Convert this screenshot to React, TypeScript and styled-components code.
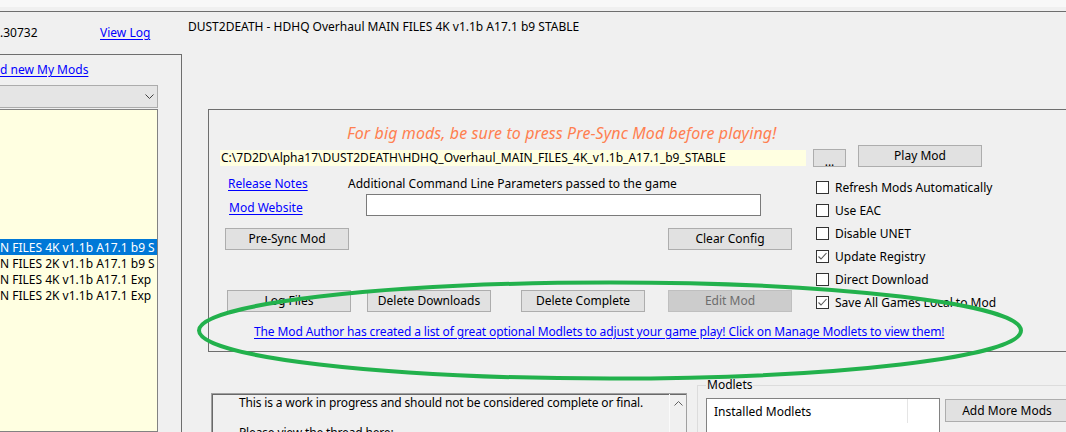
import React from "react";
import styled, { createGlobalStyle } from "styled-components";

const GlobalStyle = createGlobalStyle`
  *, *::before, *::after { box-sizing: border-box; }
  html, body { margin: 0; padding: 0; background: #f0f0f0; }
  body {
    font-family: "Noto Sans", "Open Sans", "Liberation Sans", sans-serif;
    font-size: 12px;
    color: #000;
  }
`;

const Window = styled.div`
  position: relative;
  width: 1066px;
  height: 432px;
  overflow: hidden;
  background: #f0f0f0;
  display: flex;
  flex-direction: column;
`;

const TopStrip = styled.div`
  flex: none;
  height: 12px;
  background: linear-gradient(to bottom, #f8f8f8 0 7px, #f0f0f0 7px 11px);
  border-bottom: 1px solid #6e6e6e;
`;

const Body = styled.div`
  flex: 1;
  min-height: 0;
  display: flex;
`;

const LeftColumn = styled.div`
  flex: none;
  width: 182px;
  display: flex;
  flex-direction: column;
`;

const Header = styled.div`
  flex: none;
  height: 42px;
  display: flex;
  align-items: center;
  line-height: 16px;
`;

const Version = styled.span`
  width: 100px;
  white-space: nowrap;
`;

const Link = styled.a<{ $tight?: boolean }>`
  color: #0000ff;
  text-decoration: underline;
  text-underline-offset: 2px;
  white-space: nowrap;
  line-height: 16px;
  letter-spacing: ${(p) => (p.$tight ? "-0.12px" : "normal")};
  cursor: pointer;
`;

const SidePanel = styled.div`
  flex: 1;
  min-height: 0;
  display: flex;
  flex-direction: column;
  border-top: 1px solid #6e6e6e;
  border-right: 1px solid #6e6e6e;
`;

const SideLinkRow = styled.div`
  flex: none;
  height: 30px;
  display: flex;
  align-items: center;
`;

const Combo = styled.div`
  flex: none;
  width: 159px;
  height: 23px;
  margin-left: -1px;
  background: #e5e5e5;
  border: 1px solid #acacac;
  display: flex;
  align-items: center;
  justify-content: flex-end;
  padding-right: 3px;
`;

const ModList = styled.div`
  flex: 1;
  width: 159px;
  margin-top: 1px;
  margin-left: -1px;
  background: #ffffe1;
  border: 1px solid #828282;
  padding-top: 1px;
  overflow: hidden;
`;

const ModItem = styled.div<{ $selected?: boolean }>`
  height: 16px;
  line-height: 17px;
  white-space: nowrap;
  overflow: hidden;
  background: ${(p) => (p.$selected ? "#0078d7" : "transparent")};
  color: ${(p) => (p.$selected ? "#fff" : "#000")};
`;

const RightColumn = styled.div`
  flex: 1;
  min-width: 0;
  display: flex;
  flex-direction: column;
`;

const TitleRow = styled.div`
  flex: none;
  height: 97px;
  padding: 7px 0 0 6px;
  line-height: 16px;
  white-space: nowrap;
`;

const MainBox = styled.div`
  flex: none;
  height: 243px;
  margin-left: 26px;
  margin-right: -20px;
  border: 1px solid #6e6e6e;
  display: flex;
  flex-direction: column;
`;

const Notice = styled.div`
  margin-top: 13px;
  height: 20px;
  line-height: 20px;
  padding-left: 138px;
  font-size: 16px;
  font-style: italic;
  letter-spacing: 0.1px;
  color: #ff7f50;
  white-space: nowrap;
`;

const PathRow = styled.div`
  margin-top: 2px;
  height: 22px;
  display: flex;
  align-items: flex-end;
`;

const PathField = styled.div`
  width: 586px;
  height: 16px;
  margin-left: 11px;
  margin-bottom: 1px;
  padding-left: 1px;
  line-height: 16px;
  background: #ffffe1;
  white-space: nowrap;
  overflow: hidden;
`;

const Button = styled.button<{ $w?: number; $h?: number; $disabled?: boolean }>`
  flex: none;
  width: ${(p) => p.$w ?? 124}px;
  height: ${(p) => p.$h ?? 22}px;
  padding: 0;
  margin: 0;
  font: inherit;
  line-height: 16px;
  background: ${(p) => (p.$disabled ? "#cccccc" : "#e1e1e1")};
  color: ${(p) => (p.$disabled ? "#6d6d6d" : "#000")};
  border: 1px solid ${(p) => (p.$disabled ? "#bfbfbf" : "#adadad")};
  border-radius: 0;
  white-space: nowrap;
`;

const BrowseButton = styled(Button)`
  margin-left: 7px;
  line-height: 20px;
  padding-top: 2px;
`;

const PlayButton = styled(Button)`
  margin-left: 12px;
`;

const Middle = styled.div`
  display: flex;
`;

const LeftPane = styled.div`
  flex: none;
  width: 607px;
  display: flex;
  flex-direction: column;
`;

const InfoRow = styled.div<{ $top: number; $pad: number; $h: number }>`
  margin-top: ${(p) => p.$top}px;
  height: ${(p) => p.$h}px;
  padding-left: ${(p) => p.$pad}px;
  display: flex;
  align-items: flex-end;
  line-height: 16px;
  white-space: nowrap;
`;

const LinkCell = styled.div<{ $w: number }>`
  flex: none;
  width: ${(p) => p.$w}px;
  height: 16px;
`;

const TextInput = styled.div`
  flex: none;
  width: 395px;
  height: 22px;
  background: #fff;
  border: 1px solid #7a7a7a;
`;

const SpreadRow = styled.div`
  margin-top: 12px;
  padding: 0 24px 0 16px;
  display: flex;
  justify-content: space-between;
`;

const ActionRow = styled.div`
  margin-top: 40px;
  padding-left: 18px;
  display: grid;
  grid-template-columns: 140px 154px 147px 124px;
`;

const CheckList = styled.div`
  padding-top: 9px;
  display: flex;
  flex-direction: column;
`;

const CheckRow = styled.div`
  height: 23px;
  display: flex;
  align-items: center;
  gap: 6px;
  white-space: nowrap;
  line-height: 16px;
`;

const CheckBox = styled.span`
  flex: none;
  width: 13px;
  height: 13px;
  background: #fff;
  border: 1px solid #333;
  display: flex;
  align-items: center;
  justify-content: center;
`;

const ModletLinkRow = styled.div`
  margin-top: 10px;
  height: 16px;
  padding-left: 45px;
  display: flex;
`;

const Bottom = styled.div`
  flex: 1;
  min-height: 0;
  padding-left: 29px;
  display: flex;
  align-items: flex-start;
`;

const NotesBox = styled.div`
  flex: none;
  width: 476px;
  height: 80px;
  margin-top: 41px;
  border: 1px solid #a0a0a0;
  box-shadow: inset 1px 1px 0 #696969;
  display: flex;
`;

const NotesText = styled.div`
  flex: 1;
  padding: 1px 0 0 27px;
  line-height: 15px;
  letter-spacing: -0.15px;
  color: #000;
  white-space: nowrap;
  overflow: hidden;
`;

const ScrollBar = styled.div`
  flex: none;
  width: 17px;
  border-left: 1px solid #fafafa;
  display: flex;
  justify-content: center;
  padding-top: 7px;
`;

const ModletsGroup = styled.fieldset`
  flex: 1;
  min-width: 0;
  height: 80px;
  margin: 25px 0 0 10px;
  padding: 5px 0 0 8px;
  border: 1px solid #dcdcdc;
  border-right: none;
  display: flex;
  align-items: flex-start;
`;

const GroupLegend = styled.legend`
  padding: 0 1px;
  line-height: 16px;
  font-size: 12px;
`;

const ModletList = styled.div`
  flex: none;
  width: 234px;
  height: 60px;
  background: #fff;
  border: 1px solid #828282;
`;

const ModletHeader = styled.div`
  width: 201px;
  height: 24px;
  padding: 5px 0 0 7px;
  line-height: 16px;
  border-right: 1px solid #e5e5e5;
  white-space: nowrap;
`;

const AddButton = styled(Button)`
  margin: 1px 0 0 5px;
  height: 23px;
`;

const Overlay = styled.svg`
  position: absolute;
  left: 0;
  top: 0;
  pointer-events: none;
`;

const Chevron = ({ up }: { up?: boolean }) => (
  <svg width="9" height="5" viewBox="0 0 9 5">
    <polyline
      points={up ? "0.5,4.5 4.5,0.5 8.5,4.5" : "0.5,0.5 4.5,4.5 8.5,0.5"}
      fill="none"
      stroke={up ? "#606060" : "#404040"}
      strokeWidth="1"
    />
  </svg>
);

const Check = () => (
  <svg width="11" height="11" viewBox="0 0 11 11">
    <polyline points="1.5,5.5 4,8 9.5,2" fill="none" stroke="#5a5a5a" strokeWidth="1.1" />
  </svg>
);

const mods = [
  "", "", "", "", "", "", "", "",
  "N FILES 4K v1.1b A17.1 b9 S",
  "N FILES 2K v1.1b A17.1 b9 S",
  "N FILES 4K v1.1b A17.1 Exp",
  "N FILES 2K v1.1b A17.1 Exp",
];

const options: [string, boolean][] = [
  ["Refresh Mods Automatically", false],
  ["Use EAC", false],
  ["Disable UNET", false],
  ["Update Registry", true],
  ["Direct Download", false],
  ["Save All Games Local to Mod", true],
];

export default function App() {
  return (
    <>
      <GlobalStyle />
      <Window>
        <TopStrip />
        <Body>
          <LeftColumn>
            <Header>
              <Version>.30732</Version>
              <Link>View Log</Link>
            </Header>
            <SidePanel>
              <SideLinkRow>
                <Link>d new My Mods</Link>
              </SideLinkRow>
              <Combo>
                <Chevron />
              </Combo>
              <ModList>
                {mods.map((m, i) => (
                  <ModItem key={i} $selected={i === 8}>
                    {m}
                  </ModItem>
                ))}
              </ModList>
            </SidePanel>
          </LeftColumn>
          <RightColumn>
            <TitleRow>DUST2DEATH - HDHQ Overhaul MAIN FILES 4K v1.1b A17.1 b9 STABLE</TitleRow>
            <MainBox>
              <Notice>For big mods, be sure to press Pre-Sync Mod before playing!</Notice>
              <PathRow>
                <PathField>C:\7D2D\Alpha17\DUST2DEATH\HDHQ_Overhaul_MAIN_FILES_4K_v1.1b_A17.1_b9_STABLE</PathField>
                <BrowseButton $w={33} $h={18}>...</BrowseButton>
                <PlayButton>Play Mod</PlayButton>
              </PathRow>
              <Middle>
                <LeftPane>
                  <InfoRow $top={9} $pad={19} $h={16}>
                    <LinkCell $w={120}>
                      <Link>Release Notes</Link>
                    </LinkCell>
                    <span>Additional Command Line Parameters passed to the game</span>
                  </InfoRow>
                  <InfoRow $top={2} $pad={20} $h={22}>
                    <LinkCell $w={137}>
                      <Link>Mod Website</Link>
                    </LinkCell>
                    <TextInput />
                  </InfoRow>
                  <SpreadRow>
                    <Button>Pre-Sync Mod</Button>
                    <Button>Clear Config</Button>
                  </SpreadRow>
                  <ActionRow>
                    <Button>Log Files</Button>
                    <Button>Delete Downloads</Button>
                    <Button>Delete Complete</Button>
                    <Button $disabled>Edit Mod</Button>
                  </ActionRow>
                </LeftPane>
                <CheckList>
                  {options.map(([label, on]) => (
                    <CheckRow key={label}>
                      <CheckBox>{on && <Check />}</CheckBox>
                      <span>{label}</span>
                    </CheckRow>
                  ))}
                </CheckList>
              </Middle>
              <ModletLinkRow>
                <Link $tight>
                  The Mod Author has created a list of great optional Modlets to adjust your game play! Click on Manage Modlets to view them!
                </Link>
              </ModletLinkRow>
            </MainBox>
            <Bottom>
              <NotesBox>
                <NotesText>
                  This is a work in progress and should not be considered complete or final.
                  <br />
                  <br />
                  Please view the thread here:
                </NotesText>
                <ScrollBar>
                  <Chevron up />
                </ScrollBar>
              </NotesBox>
              <ModletsGroup>
                <GroupLegend>Modlets</GroupLegend>
                <ModletList>
                  <ModletHeader>Installed Modlets</ModletHeader>
                </ModletList>
                <AddButton>Add More Mods</AddButton>
              </ModletsGroup>
            </Bottom>
          </RightColumn>
        </Body>
        <Overlay width="1066" height="432" viewBox="0 0 1066 432">
          <ellipse cx="610" cy="330.5" rx="411" ry="48" fill="none" stroke="#22b14c" strokeWidth="4" />
        </Overlay>
      </Window>
    </>
  );
}
